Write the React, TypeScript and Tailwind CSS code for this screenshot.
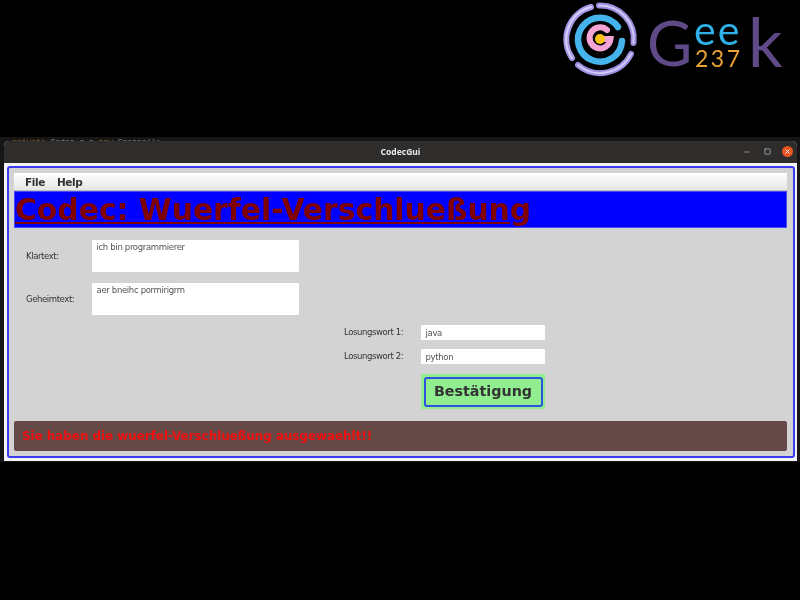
import React from 'react';
import { X, Minus, Square } from 'lucide-react';

const ui = "font-['DejaVu_Sans',sans-serif]";

const GeekLogo = () => (
  <svg width="240" height="80" viewBox="0 0 240 80" fill="none" className="block blur-[0.4px]">
    <g strokeLinecap="round">
      <path d="M31 7 A33.5 33.5 0 0 0 12 58" stroke="#a797e6" strokeWidth="6" />
      <path d="M39 5.5 A33.5 33.5 0 0 1 73.5 43" stroke="#9c8cdc" strokeWidth="6" />
      <path d="M71 54 A34.5 34.5 0 0 1 18 65" stroke="#9d8ee2" strokeWidth="6" />
      <path d="M31 7 A33.5 33.5 0 0 0 12 58" stroke="#d6cffa" strokeWidth="2" />
      <path d="M39 5.5 A33.5 33.5 0 0 1 73.5 43" stroke="#cfc7f5" strokeWidth="2" />
      <path d="M71 54 A34.5 34.5 0 0 1 18 65" stroke="#cfc7f5" strokeWidth="2" />
      <path d="M58 27 A22 22 0 1 0 62 41" stroke="#46b4ec" strokeWidth="6.5" />
      <path d="M47 30 A10.5 10.5 0 1 0 50.5 39 H45" stroke="#f3a6d6" strokeWidth="6" />
    </g>
    <circle cx="40" cy="39" r="5" fill="#fdc314" />
    <g fontFamily="Lato, sans-serif" fontWeight="400">
      <text x="87" y="66" fontSize="62" fill="#5f4a87">G</text>
      <text x="134" y="45" fontSize="41" fill="#2fb1e8" letterSpacing="2">ee</text>
      <text x="135" y="67" fontSize="23" fill="#eba235" letterSpacing="2.5">237</text>
      <text x="188" y="67" fontSize="68" fill="#5f4a87">k</text>
    </g>
  </svg>
);

const Field = ({ value, className }: { value: string; className: string }) => (
  <div className={`bg-white rounded-[1px] text-[#555] text-[8.5px] tracking-[-0.33px] leading-[10px] ${className}`}>{value}</div>
);

const Label = ({ text, className }: { text: string; className: string }) => (
  <span className={`text-[8.5px] tracking-[-0.4px] text-[#333] ${className}`}>{text}</span>
);

export default function App() {
  return (
    <div className={`w-[800px] h-[600px] bg-black overflow-hidden ${ui}`}>
      <div className="h-[80px] flex justify-end">
        <GeekLogo />
      </div>
      <div className="h-[57px]" />

      <div className="bg-[#161616] h-[325px] flex flex-col">
        {/* editor behind the window */}
        <div className="h-[4px] pl-[12px] text-[8px] leading-[10px] whitespace-pre font-['Liberation_Mono',monospace] text-[#8d8d80]">
          <span className="text-[#9a6a32]">private</span> Codec c = <span className="text-[#9a6a32]">new</span> Caesar();
        </div>

        <div className="relative ml-[4px] mr-[3px] h-[320px] rounded-t-[5px] overflow-hidden bg-[#f4f4f4] flex flex-col blur-[0.4px]">
          <div className="h-[22px] shrink-0 bg-[#2f2d2c] flex items-center relative">
            <span className="w-full text-center text-[8.5px] font-bold text-[#e8e8e8] font-['Noto_Sans',sans-serif]">CodecGui</span>
            <div className="absolute right-[4px] top-[5px] flex items-center">
              <Minus size={8} strokeWidth={2} className="text-[#bbb] mr-[13px]" />
              <Square size={7} strokeWidth={2.5} className="text-[#bbb] mr-[11px]" />
              <span className="w-[11px] h-[11px] rounded-full bg-[#e95420] flex items-center justify-center">
                <X size={7} strokeWidth={3} className="text-white" />
              </span>
            </div>
          </div>

          <div className="flex-1 pt-[3px] pb-[3px] pl-[3px] pr-[2px] flex">
            <div className="flex-1 border-2 border-[#3b3bf0] rounded-[3px] bg-[#d3d3d3] pt-[5px] pl-[5px] pr-[6px] flex flex-col">
              <div className="h-[18px] shrink-0 flex items-center gap-[12px] pl-[11px] pt-[3px] text-[10.5px] tracking-[-0.4px] font-bold text-[#333] bg-gradient-to-b from-white to-[#e6e6e6] border-b border-[#bdbdbd]">
                <span>File</span>
                <span>Help</span>
              </div>
              <div className="h-[37px] shrink-0 bg-[#0000ff] border border-[#4a4af0] text-[#800000] text-[29.8px] font-bold underline leading-[36px] whitespace-nowrap overflow-hidden">
                Codec: Wuerfel-Verschlueßung
              </div>

              <div className="flex items-center mt-[12px]">
                <Label text="Klartext:" className="w-[78px] pl-[12px]" />
                <Field value="ich bin programmierer" className="w-[207px] h-[32px] pl-[4.5px] pt-[2px]" />
              </div>
              <div className="flex items-center mt-[11px]">
                <Label text="Geheimtext:" className="w-[78px] pl-[12px]" />
                <Field value="aer bneihc pormirigrm" className="w-[207px] h-[32px] pl-[4.5px] pt-[2px]" />
              </div>

              <div className="flex items-center mt-[10px] ml-[330px]">
                <Label text="Losungswort 1:" className="w-[77px]" />
                <Field value="java" className="w-[124px] h-[15px] pl-[4.5px] pt-[3px]" />
              </div>
              <div className="flex items-center mt-[9px] ml-[330px]">
                <Label text="Losungswort 2:" className="w-[77px]" />
                <Field value="python" className="w-[124px] h-[15px] pl-[4.5px] pt-[3px]" />
              </div>

              <div className="ml-[407px] mt-[10px] w-[124px] h-[35px] bg-[#90ee90] p-[2.5px]">
                <div className="w-full h-full border-2 border-[#2e4fe0] rounded-[3px] flex items-center justify-center pt-[1px] text-[14.3px] font-bold text-[#333]">
                  Bestätigung
                </div>
              </div>

              <div className="mt-[12px] h-[30px] bg-[#654a48] rounded-[2px] flex items-center pl-[8px] pt-[1px] text-[11.9px] font-bold text-[#f01010] whitespace-nowrap">
                Sie haben die wuerfel-Verschlueßung ausgewaehlt!!
              </div>
            </div>
          </div>
        </div>
      </div>
    </div>
  );
}
